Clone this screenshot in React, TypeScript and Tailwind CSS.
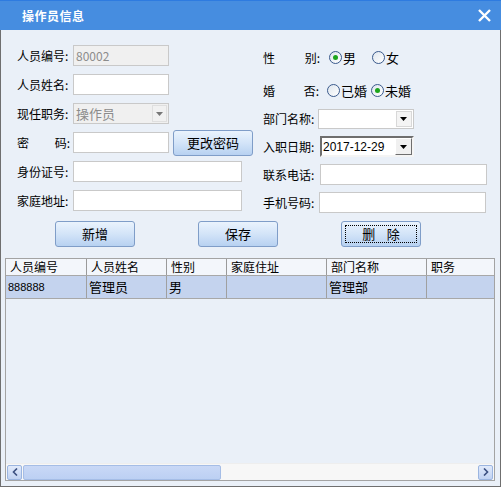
import React from 'react';

const font = { fontFamily: '"SimSun", "Noto Sans CJK SC", sans-serif' };

function TextBox({ w, value, disabled }: { w: string; value?: string; disabled?: boolean }) {
  return (
    <div
      className={`${w} shrink-0 h-[21px] border border-[#c9c9c9] flex items-center px-[2px] text-[12px] ${
        disabled ? 'bg-[#f0f0f0] text-[#8c8c8c]' : 'bg-white text-black'
      }`}
    >
      {value}
    </div>
  );
}

function Arrow() {
  return (
    <svg width="8" height="4" viewBox="0 0 8 4">
      <path d="M0 0 H7 L3.5 4 Z" fill="#000" />
    </svg>
  );
}

function Radio({ checked, label }: { checked?: boolean; label: string }) {
  return (
    <div className="flex items-center shrink-0">
      <div className="w-[13px] h-[13px] rounded-full border border-[#3a5a8c] bg-gradient-to-br from-[#dfe6ee] to-white flex items-center justify-center">
        {checked && <div className="w-[5px] h-[5px] rounded-full bg-[#1ca51c]" />}
      </div>
      <span className="ml-[1px] text-[13px]">{label}</span>
    </div>
  );
}

function Btn({ label, focus, w = 'w-[80px]' }: { label: string; focus?: boolean; w?: string }) {
  return (
    <div
      className={`${w} shrink-0 h-[26px] rounded-[3px] border border-[#7f9dc8] bg-gradient-to-b from-[#eaf3fd] via-[#d3e4f8] to-[#b7d1f1] flex items-center justify-center text-[13px] p-[3px]`}
    >
      <div
        className={`w-full h-full flex items-center justify-center whitespace-pre ${
          focus ? 'border border-dotted border-black' : ''
        }`}
      >
        {label}
      </div>
    </div>
  );
}

const cols = [
  { t: '人员编号', w: 'w-[80px]', v: '888888', small: true },
  { t: '人员姓名', w: 'w-[80px]', v: '管理员' },
  { t: '性别', w: 'w-[60px]', v: '男' },
  { t: '家庭住址', w: 'w-[100px]', v: '' },
  { t: '部门名称', w: 'w-[100px]', v: '管理部' },
  { t: '职务', w: 'w-[68px]', v: '' },
];

export default function App() {
  return (
    <div className="w-[501px] h-[487px] flex flex-col bg-[#eaf0f8] text-black" style={font}>
      {/* Title bar */}
      <div className="h-[30px] bg-[#468de0] border-t border-[#2e7be0] flex items-center justify-between pl-[22px] pr-[10px] shrink-0">
        <span className="text-white font-bold text-[12px] tracking-[0.5px]">操作员信息</span>
        <svg width="13" height="13" viewBox="0 0 13 13">
          <path d="M1 1 L12 12 M12 1 L1 12" stroke="#fff" strokeWidth="2.4" />
        </svg>
      </div>

      <div className="flex-1 flex flex-col border-x border-b border-[#6f6f6f]">
        {/* Form */}
        <div className="flex h-[186px] text-[12px] whitespace-nowrap">
          {/* Left column */}
          <div className="w-[245px] pl-[16px] pt-[15px] flex flex-col gap-[8px]">
            <div className="flex items-center h-[21px]">
              <span className="w-[56px] shrink-0">人员编号:</span>
              <TextBox w="w-[96px]" value="80002" disabled />
            </div>
            <div className="flex items-center h-[21px]">
              <span className="w-[56px] shrink-0">人员姓名:</span>
              <TextBox w="w-[96px]" />
            </div>
            <div className="flex items-center h-[21px]">
              <span className="w-[56px] shrink-0">现任职务:</span>
              <div className="w-[96px] shrink-0 h-[21px] border border-[#c9c9c9] bg-[#f0f0f0] flex items-center justify-between pl-[2px] pr-[1px] text-[#8c8c8c] text-[13px]">
                <span>操作员</span>
                <div className="w-[15px] h-[17px] border border-[#d0d0d0] bg-[#f2f2f2] flex items-center justify-center opacity-50">
                  <Arrow />
                </div>
              </div>
            </div>
            <div className="flex items-center h-[21px]">
              <span className="w-[56px] shrink-0 flex justify-between pr-[3px]">
                <span>密</span>
                <span>码:</span>
              </span>
              <TextBox w="w-[96px]" />
              <div className="ml-[4px]">
                <Btn label="更改密码" w="w-[80px]" />
              </div>
            </div>
            <div className="flex items-center h-[21px]">
              <span className="w-[56px] shrink-0">身份证号:</span>
              <TextBox w="w-[169px]" />
            </div>
            <div className="flex items-center h-[21px]">
              <span className="w-[56px] shrink-0">家庭地址:</span>
              <TextBox w="w-[169px]" />
            </div>
          </div>

          {/* Right column */}
          <div className="flex-1 pl-[17px] pt-[17px] flex flex-col">
            <div className="flex items-center h-[21px]">
              <span className="w-[66px] shrink-0 flex justify-between pr-[9px]">
                <span>性</span>
                <span>别:</span>
              </span>
              <Radio checked label="男" />
              <div className="ml-[16px]">
                <Radio label="女" />
              </div>
            </div>
            <div className="flex items-center h-[21px] mt-[12px]">
              <span className="w-[64px] shrink-0 flex justify-between pr-[8px]">
                <span>婚</span>
                <span>否:</span>
              </span>
              <Radio label="已婚" />
              <div className="ml-[4px]">
                <Radio checked label="未婚" />
              </div>
            </div>
            <div className="flex items-center h-[20px] mt-[8px]">
              <span className="w-[55px] shrink-0">部门名称:</span>
              <div className="w-[96px] shrink-0 h-[20px] border border-[#c9c9c9] bg-white flex items-center justify-end pr-[1px]">
                <div className="w-[16px] h-[16px] bg-[#f4f4f4] border border-[#d8d8d8] flex items-center justify-center">
                  <Arrow />
                </div>
              </div>
            </div>
            <div className="flex items-center h-[21px] mt-[7px]">
              <span className="w-[57px] shrink-0">入职日期:</span>
              <div className="w-[94px] shrink-0 h-[21px] border-2 border-t-[#6e6e6e] border-l-[#6e6e6e] border-b-[#f4f4f4] border-r-[#f4f4f4] bg-white flex items-center justify-between pl-[1px] pr-0">
                <span className="text-[12px]" style={{ fontFamily: '"Liberation Sans", sans-serif' }}>
                  2017-12-29
                </span>
                <div className="w-[17px] h-[17px] bg-[#f0f0f0] border border-t-white border-l-white border-b-[#6e6e6e] border-r-[#6e6e6e] flex items-center justify-center">
                  <Arrow />
                </div>
              </div>
            </div>
            <div className="flex items-center h-[21px] mt-[7px]">
              <span className="w-[57px] shrink-0">联系电话:</span>
              <TextBox w="w-[167px]" />
            </div>
            <div className="flex items-center h-[21px] mt-[7px]">
              <span className="w-[56px] shrink-0">手机号码:</span>
              <TextBox w="w-[167px]" />
            </div>
          </div>
        </div>

        {/* Buttons */}
        <div className="flex pl-[54px] gap-[63px] h-[26px] mt-[5px]">
          <Btn label="新增" />
          <Btn label="保存" />
          <Btn label="删    除" focus />
        </div>

        {/* Grid */}
        <div className="mx-[4px] mt-[11px] w-[490px] h-[223px] border border-[#a3a3a3] flex flex-col bg-[#eaf0f8]">
          <div className="flex h-[17px] bg-[#f3f6fb] border-b border-[#a8a8a8] text-[12px]">
            {cols.map((c, i) => (
              <div
                key={c.t}
                className={`${c.w} shrink-0 h-full flex items-center pl-[4px] ${i > 0 ? 'border-l border-[#9a9a9a]' : ''}`}
              >
                <span className="leading-none">{c.t}</span>
              </div>
            ))}
          </div>
          <div className="flex h-[23px] bg-[#c4d3ee] border-b border-[#a8a8a8]">
            {cols.map((c, i) => (
              <div
                key={c.t}
                className={`${c.w} shrink-0 h-full flex items-center pl-[2px] ${i > 0 ? 'border-l border-[#a0a0a0]' : ''} ${
                  c.small ? 'text-[11px]' : 'text-[13px]'
                }`}
                style={c.small ? { fontFamily: '"Liberation Sans", sans-serif' } : undefined}
              >
                {c.v}
              </div>
            ))}
          </div>
          <div className="flex-1" />
          {/* Horizontal scrollbar */}
          <div className="h-[17px] flex items-center bg-[#f7f7f7] border-t border-[#eeeeee]">
            <div className="w-[15px] h-[15px] ml-[1px] rounded-[2px] border border-[#9bb5e0] bg-gradient-to-b from-[#e1eafb] to-[#c0d2f2] flex items-center justify-center">
              <svg width="6" height="8" viewBox="0 0 6 8">
                <path d="M5 0.5 L1.5 4 L5 7.5" stroke="#3b4f80" strokeWidth="1.6" fill="none" />
              </svg>
            </div>
            <div className="w-[198px] h-[15px] ml-[1px] rounded-[2px] border border-[#a5bde6] bg-gradient-to-b from-[#c9d8f6] to-[#bcd0f3]" />
            <div className="flex-1" />
            <div className="w-[15px] h-[15px] mr-[1px] rounded-[2px] border border-[#9bb5e0] bg-gradient-to-b from-[#e1eafb] to-[#c0d2f2] flex items-center justify-center">
              <svg width="6" height="8" viewBox="0 0 6 8">
                <path d="M1 0.5 L4.5 4 L1 7.5" stroke="#3b4f80" strokeWidth="1.6" fill="none" />
              </svg>
            </div>
          </div>
        </div>
      </div>
    </div>
  );
}
